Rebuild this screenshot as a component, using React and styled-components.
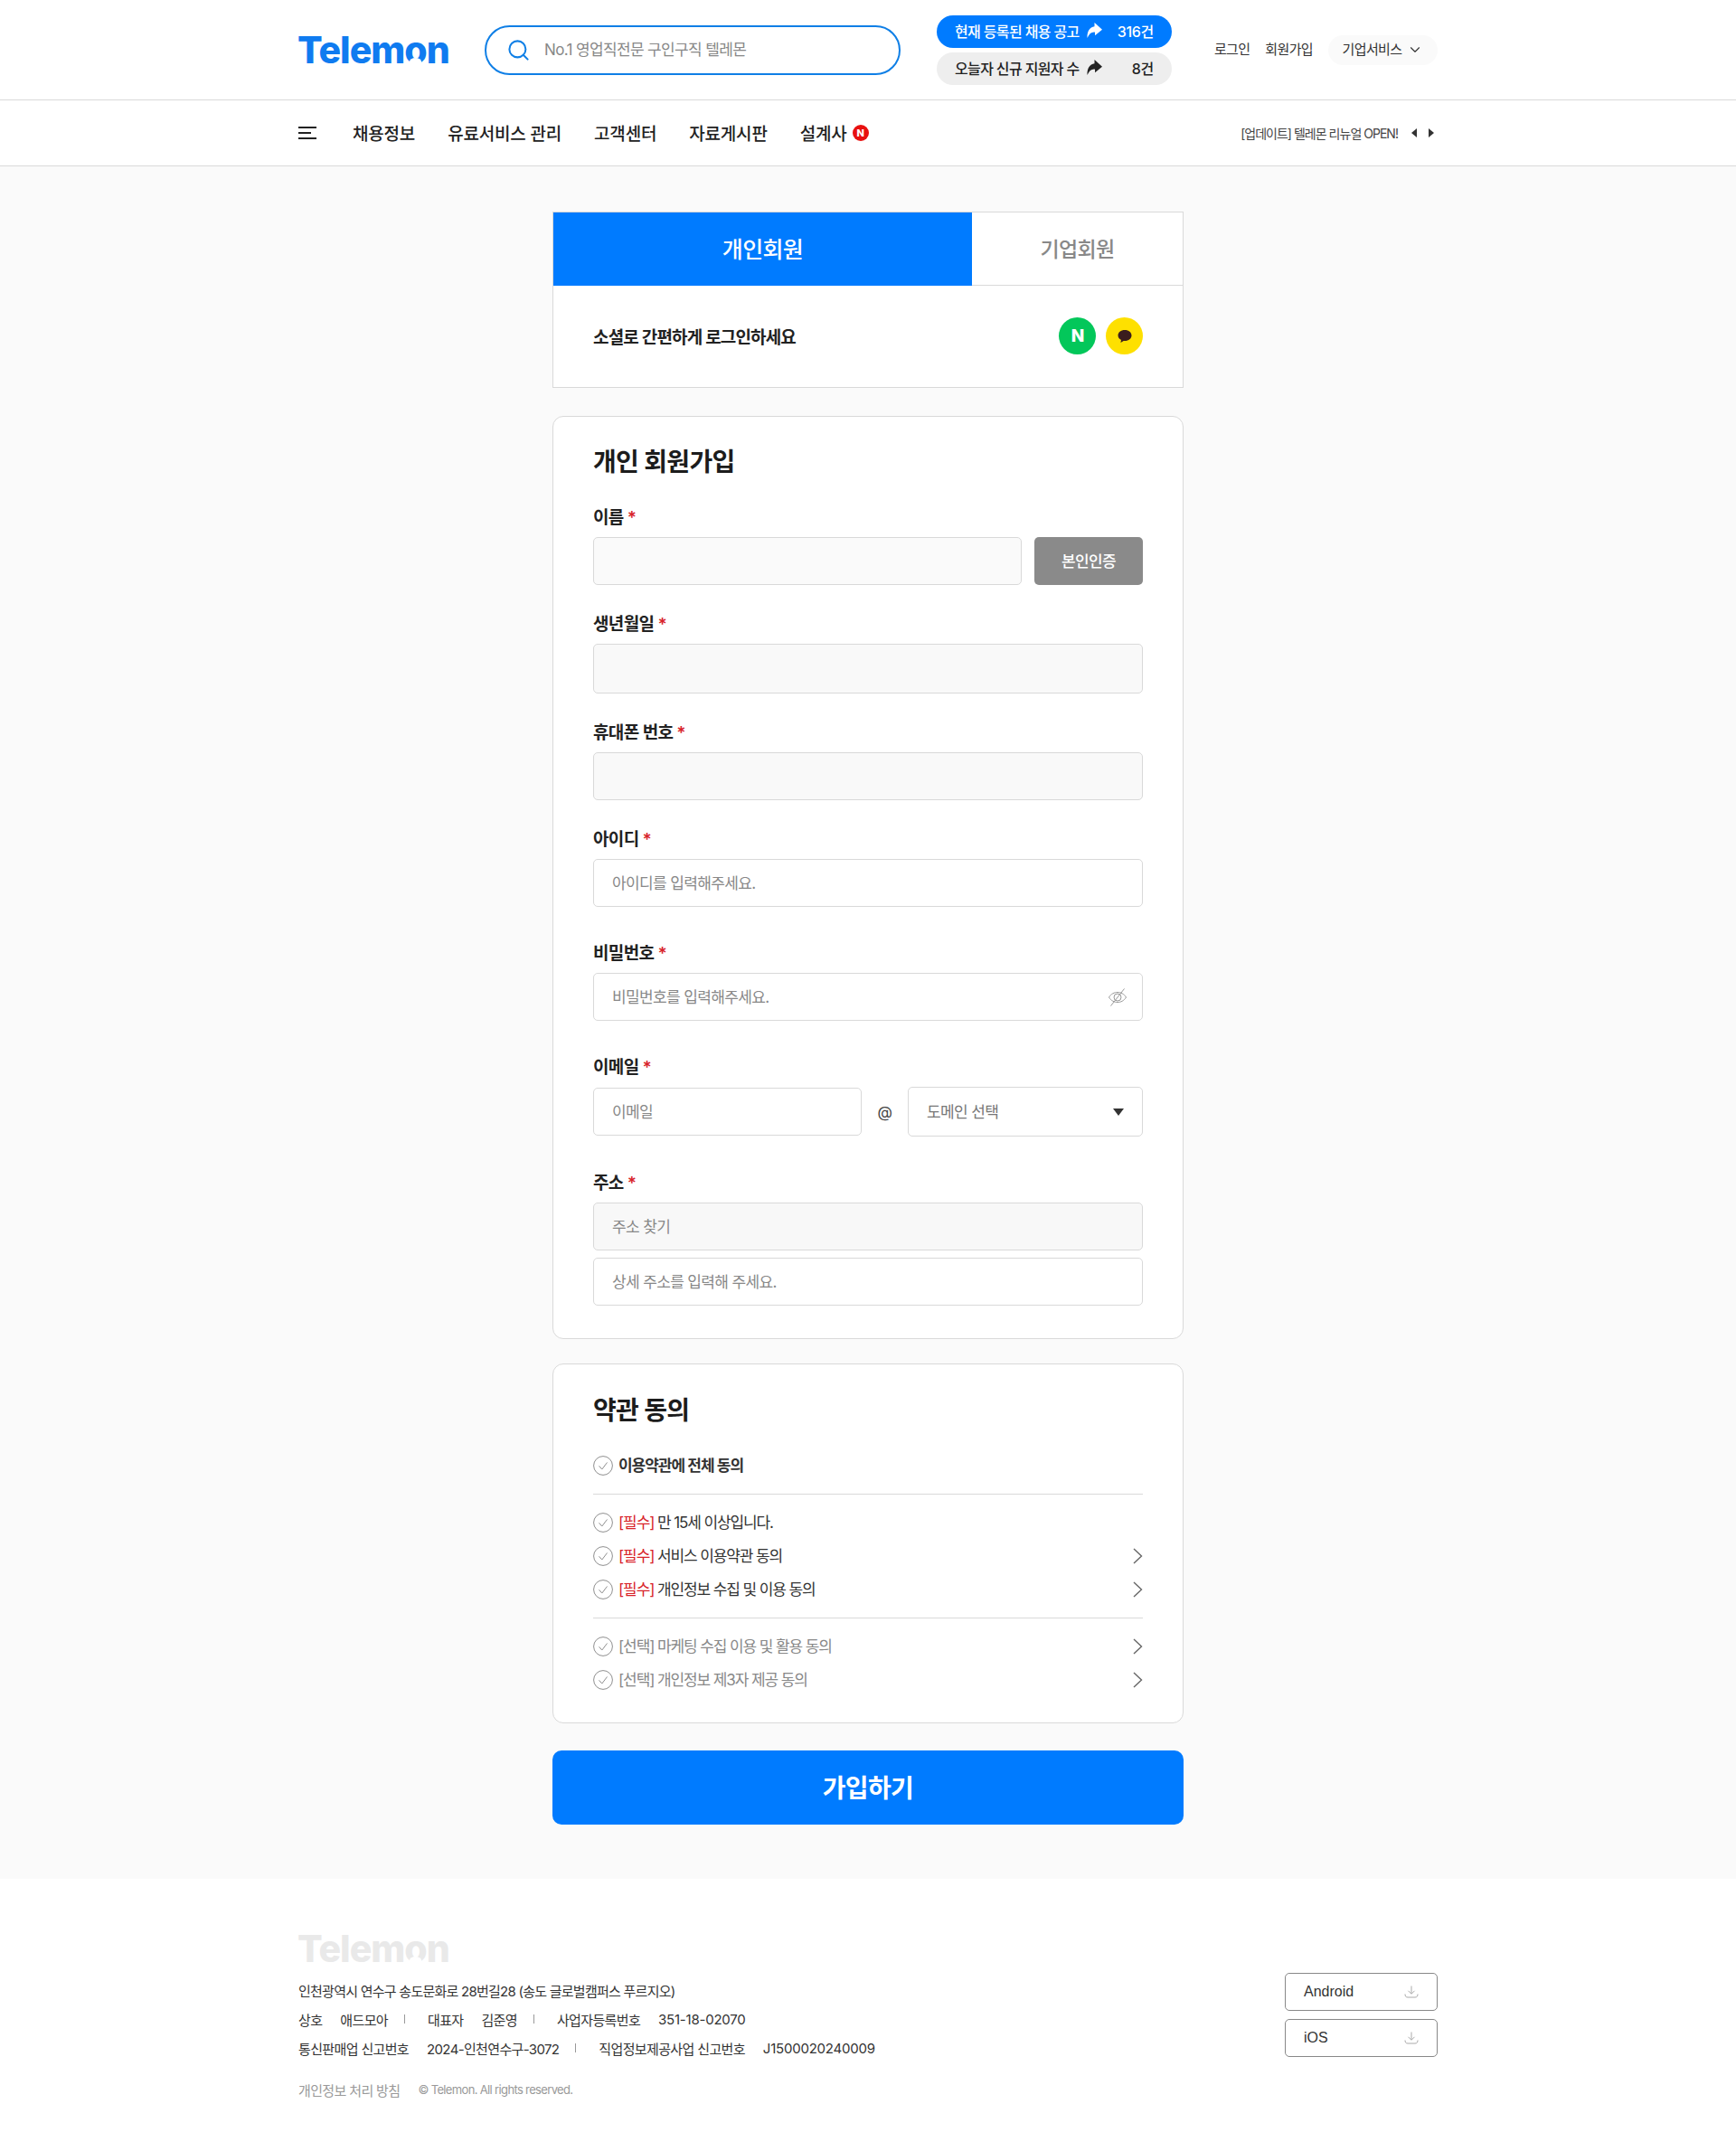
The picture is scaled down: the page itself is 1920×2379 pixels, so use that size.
import React from "react";
import styled, { createGlobalStyle } from "styled-components";
import { Search, ChevronDown } from "lucide-react";

const blue = "#007bff";

const GlobalStyle = createGlobalStyle`
  * { box-sizing: border-box; }
  body {
    margin: 0;
    background: #fff;
    color: #222;
    font-family: Inter, "Noto Sans CJK KR", sans-serif;
    letter-spacing: -0.04em;
  }
  input, select, button { font-family: inherit; letter-spacing: inherit; }
`;

const Inner = styled.div`
  width: 1260px;
  margin: 0 auto;
  display: flex;
  align-items: center;
`;

const TopBar = styled.header`
  height: 111px;
  border-bottom: 1px solid #d9d9d9;
  ${Inner} { height: 110px; }
`;

const Logo = styled.div`
  width: 167px;
  margin-left: -1px;
  font-size: 41px;
  line-height: 44px;
  font-weight: 800;
  letter-spacing: -0.025em;
  white-space: nowrap;
  color: ${(p) => p.$color};
`;

const LogoO = styled.span`
  position: relative;
  &::after {
    content: "";
    position: absolute;
    left: 50%;
    bottom: 8px;
    width: 13px;
    height: 8px;
    margin-left: -6.5px;
    border-radius: 50% 50% 0 0;
    background: #fff;
  }
`;

const SearchBox = styled.div`
  width: 460px;
  height: 55px;
  margin-left: 40px;
  padding: 0 22px;
  display: flex;
  align-items: center;
  gap: 13px;
  border: 2px solid #0f7fe6;
  border-radius: 28px;
  color: #0f7fe6;
  input {
    flex: 1;
    border: 0;
    outline: 0;
    background: none;
    font-size: 17px;
  }
  input::placeholder { color: #888; opacity: 1; }
`;

const Pills = styled.div`
  width: 260px;
  margin-left: 40px;
  display: flex;
  flex-direction: column;
  gap: 5px;
`;

const Pill = styled.a`
  height: 36px;
  padding: 0 20px 2px;
  display: flex;
  align-items: center;
  border-radius: 18px;
  font-size: 16px;
  font-weight: 500;
  background: ${(p) => (p.$primary ? blue : "#eeeeee")};
  color: ${(p) => (p.$primary ? "#fff" : "#222")};
  b {
    margin-left: auto;
    font-weight: 500;
    letter-spacing: -0.02em;
  }
  svg { margin-left: 8px; }
`;

const UserMenu = styled.nav`
  margin-left: auto;
  display: flex;
  align-items: center;
  font-size: 15px;
  color: #333;
`;

const UserLink = styled.a`
  margin-right: 17px;
  padding-bottom: 3px;
`;

const ServiceBtn = styled.a`
  width: 121px;
  height: 33px;
  display: flex;
  align-items: center;
  justify-content: center;
  gap: 6px;
  padding-bottom: 3px;
  border-radius: 17px;
  background: #fafafa;
  svg { margin-top: 3px; }
`;

const NavBar = styled.nav`
  height: 73px;
  background: #fff;
  border-bottom: 1px solid #d9d9d9;
  ${Inner} { height: 72px; }
`;

const Burger = styled.svg`
  margin-right: 40px;
`;

const NavItem = styled.a`
  margin-right: 36px;
  padding-bottom: 2px;
  display: flex;
  align-items: center;
  gap: 6px;
  font-size: 19px;
  font-weight: 500;
  letter-spacing: -0.01em;
  color: #222;
`;

const NewBadge = styled.span`
  width: 18px;
  height: 18px;
  margin-top: 2px;
  display: flex;
  align-items: center;
  justify-content: center;
  border-radius: 50%;
  background: #e8100f;
  color: #fff;
  font-size: 11px;
  font-weight: 800;
`;

const Notice = styled.div`
  margin-left: auto;
  display: flex;
  align-items: center;
  font-size: 14px;
  letter-spacing: -0.07em;
  color: #444;
  svg:first-of-type { margin-left: 15px; }
  svg:last-of-type { margin-left: 13px; margin-right: 4px; }
`;

const Main = styled.main`
  background: #fafafa;
  padding: 50px 0 60px;
`;

const Column = styled.div`
  width: 698px;
  margin: 0 auto;
`;

const SocialBox = styled.section`
  height: 195px;
  background: #fff;
  border: 1px solid #d9d9d9;
`;

const Tabs = styled.div`
  height: 81px;
  display: flex;
  border-bottom: 1px solid #d9d9d9;
`;

const Tab = styled.a`
  flex: ${(p) => (p.$active ? "0 0 463px" : "1")};
  height: ${(p) => (p.$active ? "81px" : "80px")};
  padding-bottom: 3px;
  display: flex;
  align-items: center;
  justify-content: center;
  font-size: ${(p) => (p.$active ? "25px" : "23px")};
  font-weight: 500;
  background: ${(p) => (p.$active ? blue : "#fff")};
  color: ${(p) => (p.$active ? "#fff" : "#888")};
`;

const SocialRow = styled.div`
  height: 112px;
  padding: 0 44px 1px;
  display: flex;
  align-items: center;
  justify-content: space-between;
  font-size: 19px;
  font-weight: 600;
  letter-spacing: -0.045em;
`;

const SocialIcons = styled.div`
  display: flex;
  gap: 11px;
`;

const SocialIcon = styled.a`
  width: 41px;
  height: 41px;
  display: flex;
  align-items: center;
  justify-content: center;
  border-radius: 50%;
  font-size: 19px;
  font-weight: 800;
  color: #fff;
  background: ${(p) => p.$bg};
`;

const Card = styled.section`
  margin-top: ${(p) => p.$top}px;
  padding: ${(p) => p.$pad};
  background: #fff;
  border: 1px solid #d9d9d9;
  border-radius: 12px;
`;

const CardTitle = styled.h2`
  margin: 0;
  height: 40px;
  padding-top: 3px;
  font-size: 28px;
  line-height: 37px;
  font-weight: 700;
  color: #1c1c1c;
`;

const Field = styled.div`
  margin-top: ${(p) => p.$gap}px;
`;

const Label = styled.label`
  display: block;
  height: 26px;
  padding-top: 2px;
  margin-bottom: 9px;
  font-size: 19px;
  line-height: 24px;
  font-weight: 600;
  color: #222;
  i {
    margin-left: 4px;
    font-style: normal;
    color: #d8232a;
  }
`;

const Row = styled.div`
  display: flex;
  align-items: center;
`;

const Input = styled.input`
  display: block;
  width: ${(p) => p.$width || "100%"};
  height: ${(p) => p.$height || 53}px;
  margin-top: ${(p) => p.$top || 0}px;
  padding: 0 20px;
  border: 1px solid #d9d9d9;
  border-radius: 5px;
  outline: 0;
  font-size: 17px;
  color: #222;
  background: ${(p) => p.$bg || "#fff"};
  &::placeholder { color: #888; opacity: 1; }
`;

const VerifyBtn = styled.button`
  width: 120px;
  height: 53px;
  margin-left: auto;
  padding: 0 0 2px;
  border: 0;
  border-radius: 5px;
  background: #8a8a8a;
  color: #fff;
  font-size: 17px;
  font-weight: 500;
`;

const PasswordWrap = styled.div`
  position: relative;
  svg {
    position: absolute;
    right: 17px;
    top: 16px;
  }
`;

const AtSign = styled.span`
  width: 51px;
  text-align: center;
  font-size: 17px;
  color: #444;
`;

const SelectWrap = styled.div`
  position: relative;
  flex: 1;
  svg {
    position: absolute;
    right: 21px;
    top: 24px;
  }
`;

const Select = styled.select`
  display: block;
  width: 100%;
  height: 55px;
  padding: 0 20px;
  border: 1px solid #d9d9d9;
  border-radius: 5px;
  outline: 0;
  appearance: none;
  font-size: 17px;
  color: #777;
  background: #fff;
`;

const Divider = styled.hr`
  margin: 16px 0;
  border: 0;
  border-top: 1px solid #d9d9d9;
`;

const TermList = styled.div`
  display: flex;
  flex-direction: column;
  gap: 7px;
`;

const Term = styled.div`
  height: 30px;
  display: flex;
  align-items: center;
  gap: 6px;
  font-size: 17px;
  letter-spacing: ${(p) => (p.$strong ? "-0.06em" : "-0.065em")};
  font-weight: ${(p) => (p.$strong ? 600 : 400)};
  color: ${(p) => (p.$muted ? "#888" : "#333")};
  margin-top: ${(p) => (p.$strong ? "27px" : "0")};
  span { padding-bottom: 3px; }
  em {
    font-style: normal;
    color: #d8232a;
  }
  svg:last-child:not(:first-child) { margin-left: auto; }
`;

const SubmitBtn = styled.button`
  display: block;
  width: 100%;
  height: 82px;
  margin-top: 30px;
  padding: 0 0 3px;
  border: 0;
  border-radius: 10px;
  background: ${blue};
  color: #fff;
  font-size: 28px;
  font-weight: 600;
`;

const Footer = styled.footer`
  height: 300px;
  padding-top: 55px;
  background: #fff;
  ${Inner} {
    align-items: flex-start;
    justify-content: space-between;
  }
`;

const FootInfo = styled.div`
  font-size: 15px;
  color: #333;
`;

const FootRow = styled.div`
  height: 32px;
  display: flex;
  align-items: center;
  span + span { margin-left: 20px; }
`;

const FootAddress = styled(FootRow)`
  margin-top: 8px;
  letter-spacing: -0.05em;
`;

const FootNum = styled.span`
  letter-spacing: -0.015em;
`;

const FootSep = styled.i`
  width: 1px;
  height: 10px;
  margin: 0 25px 0 18px;
  background: #999;
`;

const FootLegal = styled(FootRow)`
  margin-top: 14px;
  color: #999;
  small { font-size: 13px; margin-left: 20px; letter-spacing: -0.05em; }
`;

const Apps = styled.div`
  margin-top: 49px;
  display: flex;
  flex-direction: column;
  gap: 9px;
`;

const AppBtn = styled.a`
  width: 169px;
  height: 42px;
  padding: 0 20px;
  display: flex;
  align-items: center;
  justify-content: space-between;
  border: 1px solid #888;
  border-radius: 5px;
  background: #fff;
  font-family: "Liberation Sans", sans-serif;
  font-size: 16px;
  letter-spacing: 0;
  color: #333;
`;

const ShareArrow = ({ color }) => (
  <svg width="17" height="17" viewBox="0 0 16 16" fill={color}>
    <path d="M8 0 16 7.200 8.500 13.500V10C5 9.500 2.500 11.500 0.500 16 0 9.500 3 4.500 8 4Z" />
  </svg>
);

const CheckCircle = () => (
  <svg width="22" height="22" viewBox="0 0 22 22" fill="none" stroke="#8f8f8f" strokeWidth="1">
    <circle cx="11" cy="11" r="10.400" />
    <path d="M6.500 11.300 9.800 15 15.500 7.500" />
  </svg>
);

const Chevron = () => (
  <svg width="12" height="20" viewBox="0 0 12 20" fill="none" stroke="#666" strokeWidth="1.400">
    <path d="M2 2 10.500 10 2 18" />
  </svg>
);

const Download = () => (
  <svg width="16" height="16" viewBox="0 0 16 16" fill="none" stroke="#aaa" strokeWidth="1">
    <path d="M8 1.500V10M4.500 6.800 8 10.300 11.500 6.800M1 10.500C1 13 2 14 4 14H12C14 14 15 13 15 10.500" />
  </svg>
);

const Caret = ({ dir }) => (
  <svg width="6" height="10" viewBox="0 0 6 10" fill="#333">
    <path d={dir === "left" ? "M6 0V10L0 5Z" : "M0 0V10L6 5Z"} />
  </svg>
);

const Req = () => <i>*</i>;

const required = [
  { text: "만 15세 이상입니다." },
  { text: "서비스 이용약관 동의", more: true },
  { text: "개인정보 수집 및 이용 동의", more: true },
];

const optional = ["마케팅 수집 이용 및 활용 동의", "개인정보 제3자 제공 동의"];

const App = () => {
  return (
    <>
      <GlobalStyle />
      <TopBar>
        <Inner>
          <Logo $color="#0f7bf0">Telem<LogoO>o</LogoO>n</Logo>
          <SearchBox>
            <Search size={27} strokeWidth={1.8} />
            <input placeholder="No.1 영업직전문 구인구직 텔레몬" />
          </SearchBox>
          <Pills>
            <Pill $primary>현재 등록된 채용 공고<ShareArrow color="#fff" /><b>316건</b></Pill>
            <Pill>오늘자 신규 지원자 수<ShareArrow color="#222" /><b>8건</b></Pill>
          </Pills>
          <UserMenu>
            <UserLink>로그인</UserLink>
            <UserLink>회원가입</UserLink>
            <ServiceBtn>기업서비스<ChevronDown size={18} strokeWidth={1.5} /></ServiceBtn>
          </UserMenu>
        </Inner>
      </TopBar>
      <NavBar>
        <Inner>
          <Burger width="20" height="14" viewBox="0 0 20 14" fill="#222">
            <rect width="20" height="2" />
            <rect y="6" width="14" height="2" />
            <rect y="12" width="20" height="2" />
          </Burger>
          <NavItem>채용정보</NavItem>
          <NavItem>유료서비스 관리</NavItem>
          <NavItem>고객센터</NavItem>
          <NavItem>자료게시판</NavItem>
          <NavItem>설계사<NewBadge>N</NewBadge></NavItem>
          <Notice>
            [업데이트] 텔레몬 리뉴얼 OPEN!
            <Caret dir="left" />
            <Caret dir="right" />
          </Notice>
        </Inner>
      </NavBar>
      <Main>
        <Column>
          <SocialBox>
            <Tabs>
              <Tab $active>개인회원</Tab>
              <Tab>기업회원</Tab>
            </Tabs>
            <SocialRow>
              소셜로 간편하게 로그인하세요
              <SocialIcons>
                <SocialIcon $bg="#03c75a">N</SocialIcon>
                <SocialIcon $bg="#fee000">
                  <svg width="20" height="20" viewBox="0 0 20 20" fill="#3a1d1d">
                    <path d="M10 3C5.600 3 2.500 5.600 2.500 9 2.500 11.200 3.900 13 6 14L5.400 17 8.700 14.900C9.100 15 9.600 15 10 15 14.400 15 17.500 12.400 17.500 9 17.500 5.600 14.400 3 10 3Z" />
                  </svg>
                </SocialIcon>
              </SocialIcons>
            </SocialRow>
          </SocialBox>

          <Card $top={31} $pad="29px 44px 36px">
            <CardTitle>개인 회원가입</CardTitle>
            <Field $gap={29}>
              <Label>이름<Req /></Label>
              <Row>
                <Input $width="474px" $bg="#fafafa" disabled />
                <VerifyBtn>본인인증</VerifyBtn>
              </Row>
            </Field>
            <Field $gap={30}>
              <Label>생년월일<Req /></Label>
              <Input $height={55} $bg="#f9f9f9" disabled />
            </Field>
            <Field $gap={30}>
              <Label>휴대폰 번호<Req /></Label>
              <Input $bg="#f9f9f9" disabled />
            </Field>
            <Field $gap={30}>
              <Label>아이디<Req /></Label>
              <Input placeholder="아이디를 입력해주세요." />
            </Field>
            <Field $gap={38}>
              <Label>비밀번호<Req /></Label>
              <PasswordWrap>
                <Input placeholder="비밀번호를 입력해주세요." />
                <svg width="22" height="22" viewBox="0 0 22 22" fill="none" stroke="#999" strokeWidth="1">
                  <path d="M1.500 11C4 7 7.500 5.500 11 5.500S18 7 20.500 11C18 15 14.500 16.500 11 16.500S4 15 1.500 11Z" />
                  <circle cx="11" cy="11" r="4" />
                  <path d="M3.500 20.500 18.500 1.500" />
                </svg>
              </PasswordWrap>
            </Field>
            <Field $gap={38}>
              <Label>이메일<Req /></Label>
              <Row>
                <Input $width="297px" placeholder="이메일" />
                <AtSign>@</AtSign>
                <SelectWrap>
                  <Select defaultValue="">
                    <option value="">도메인 선택</option>
                  </Select>
                  <svg width="12" height="8" viewBox="0 0 12 8" fill="#333">
                    <path d="M0 0H12L6 8Z" />
                  </svg>
                </SelectWrap>
              </Row>
            </Field>
            <Field $gap={38}>
              <Label>주소<Req /></Label>
              <Input $bg="#f8f8f8" placeholder="주소 찾기" />
              <Input $top={8} placeholder="상세 주소를 입력해 주세요." />
            </Field>
          </Card>

          <Card $top={27} $pad="30px 44px 32px">
            <CardTitle>약관 동의</CardTitle>
            <Term $strong><CheckCircle /><span>이용약관에 전체 동의</span></Term>
            <Divider />
            <TermList>
              {required.map((item) => (
                <Term key={item.text}>
                  <CheckCircle />
                  <span><em>[필수]</em> {item.text}</span>
                  {item.more && <Chevron />}
                </Term>
              ))}
            </TermList>
            <Divider />
            <TermList>
              {optional.map((text) => (
                <Term key={text} $muted>
                  <CheckCircle />
                  <span>[선택] {text}</span>
                  <Chevron />
                </Term>
              ))}
            </TermList>
          </Card>

          <SubmitBtn>가입하기</SubmitBtn>
        </Column>
      </Main>
      <Footer>
        <Inner>
          <FootInfo>
            <Logo $color="#e9e9e9">Telem<LogoO>o</LogoO>n</Logo>
            <FootAddress>인천광역시 연수구 송도문화로 28번길28 (송도 글로벌캠퍼스 푸르지오)</FootAddress>
            <FootRow>
              <span>상호</span><span>애드모아</span><FootSep />
              <span>대표자</span><span>김준영</span><FootSep />
              <span>사업자등록번호</span><FootNum>351-18-02070</FootNum>
            </FootRow>
            <FootRow>
              <span>통신판매업 신고번호</span><span>2024-인천연수구-3072</span><FootSep />
              <span>직업정보제공사업 신고번호</span><FootNum>J1500020240009</FootNum>
            </FootRow>
            <FootLegal>
              개인정보 처리 방침
              <small>© Telemon. All rights reserved.</small>
            </FootLegal>
          </FootInfo>
          <Apps>
            <AppBtn>Android<Download /></AppBtn>
            <AppBtn>iOS<Download /></AppBtn>
          </Apps>
        </Inner>
      </Footer>
    </>
  );
};

export default App;
